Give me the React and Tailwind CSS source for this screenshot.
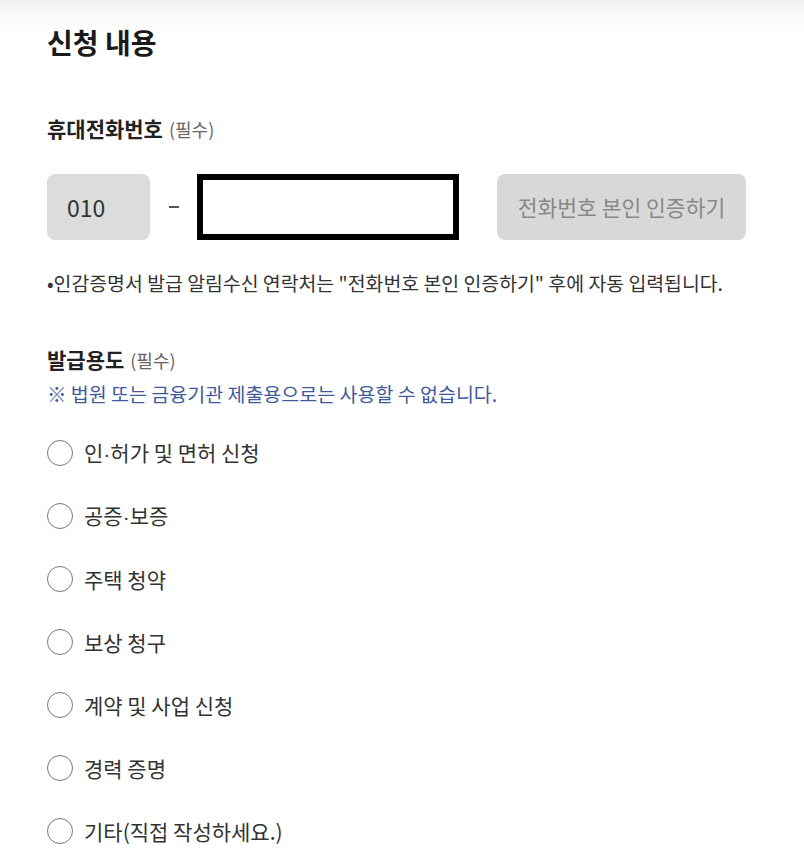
import React, { useState } from 'react';

const purposes = [
    '인·허가 및 면허 신청',
    '공증·보증',
    '주택 청약',
    '보상 청구',
    '계약 및 사업 신청',
    '경력 증명',
    '기타(직접 작성하세요.)',
];

// the middle dot is drawn narrow in the original, so give it a latin font
const renderLabel = (text) => {
    const parts = text.split('·');
    return parts.map((part, i) => (
        <React.Fragment key={i}>
            {i > 0 && <span style={{ fontFamily: '"Liberation Sans", sans-serif' }}>·</span>}
            {part}
        </React.Fragment>
    ));
};

const App = () => {
    const [selected, setSelected] = useState(null);

    return (
        <div
            className="w-[804px] h-[868px] overflow-hidden bg-[linear-gradient(to_bottom,#f2f2f2_0px,#ffffff_34px)] pl-[47px] pt-[25px] text-[#222]"
            style={{ fontFamily: '"Noto Sans CJK KR", "Noto Sans", sans-serif' }}
        >
            {/* title */}
            <h1 className="h-[34px] leading-[34px] text-[28px] font-bold text-[#1a1a1a]">신청 내용</h1>

            {/* phone */}
            <div className="mt-[57px] h-[24px] leading-[24px] flex items-baseline">
                <span className="text-[21px] font-bold">휴대전화번호</span>
                <span className="ml-[6px] text-[18px] text-[#666]">(필수)</span>
            </div>

            <div className="mt-[34px] h-[66px] flex items-center">
                <div className="w-[103px] h-[66px] rounded-[8px] bg-[#dcdcdc] flex items-center pl-[20px] text-[23px] text-[#333]">
                    010
                </div>
                <div className="w-[47px] flex justify-center">
                    <div className="w-[10px] h-[1.5px] bg-[#555]" />
                </div>
                <div className="w-[262px] h-[66px] border-[6px] border-black bg-white" />
                <button className="ml-[38px] w-[249px] h-[66px] rounded-[8px] bg-[#d8d8d8] text-[21.5px] text-[#888]">
                    전화번호 본인 인증하기
                </button>
            </div>

            <p className="mt-[31px] h-[24px] leading-[24px] text-[19.4px] text-[#333]">
                •인감증명서 발급 알림수신 연락처는 "전화번호 본인 인증하기" 후에 자동 입력됩니다.
            </p>

            {/* purpose */}
            <div className="mt-[52px] h-[24px] leading-[24px] flex items-baseline">
                <span className="text-[21px] font-bold">발급용도</span>
                <span className="ml-[6px] text-[18px] text-[#666]">(필수)</span>
            </div>
            <p className="mt-[11px] h-[24px] leading-[24px] text-[19.5px] text-[#3f5a9c]">
                ※ 법원 또는 금융기관 제출용으로는 사용할 수 없습니다.
            </p>

            <ul className="mt-[15px]">
                {purposes.map((p, i) => (
                    <li key={i} className="h-[63px] flex items-center cursor-pointer" onClick={() => setSelected(i)}>
                        <span className="w-[26px] h-[26px] rounded-full border-[1.5px] border-[#777] bg-white flex items-center justify-center">
                            {selected === i && <span className="w-[12px] h-[12px] rounded-full bg-[#333]" />}
                        </span>
                        <span className="ml-[11px] text-[21px] leading-[26px] text-[#333]">{renderLabel(p)}</span>
                    </li>
                ))}
            </ul>
        </div>
    );
};

export default App;
